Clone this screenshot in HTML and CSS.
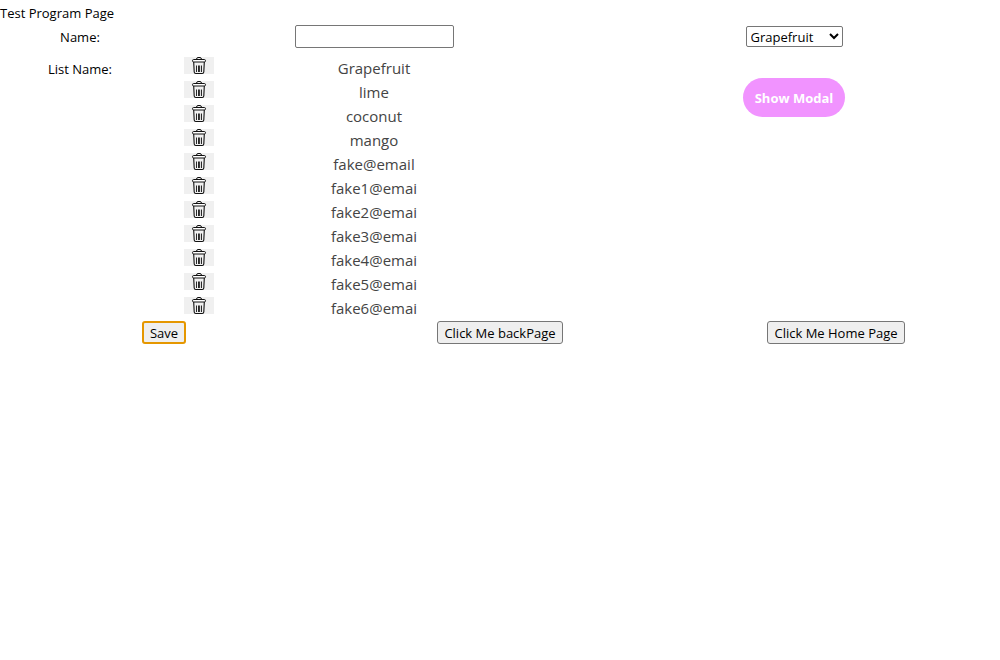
FILE: index.html
```
<!DOCTYPE html>
<html lang="en">
<head>
<meta charset="utf-8">
<title>Test Program Page</title>
<link rel="stylesheet" href="styles.css">
</head>
<body>
<svg class="symbols" aria-hidden="true">
  <symbol id="trash" viewBox="0 0 16 18">
    <g fill="none" stroke="#111" stroke-linejoin="round">
      <path stroke-width="1" d="M5.5 2.5Q5.5 .5 7 .5H9Q10.500 .5 10.500 2.5"/>
      <rect stroke-width="1" x="1.500" y="2.500" width="13" height="2.500" rx="1.200" fill="#fff"/>
      <path stroke-width="1.100" d="M2.700 5L3.200 15Q3.300 16.500 4.800 16.500H11.200Q12.700 16.500 12.800 15L13.300 5"/>
      <path stroke-width=".9" d="M5.500 8.500V15M7.500 8.500V15M8.600 8.500V15M10.500 8.500V15"/>
    </g>
  </symbol>
</svg>
<header class="title">Test Program Page</header>
<main>
  <div class="row name-row">
    <label for="name">Name:</label>
    <input class="name-input" id="name" type="text">
    <select class="fruit" aria-label="Fruit">
      <option>Grapefruit</option><option>lime</option><option>coconut</option><option>mango</option>
    </select>
  </div>
  <div class="row list-row">
    <div class="list-label">List Name:</div>
    <ul class="list">
      <li><button class="delete" aria-label="Delete"><svg><use href="#trash"/></svg></button><span>Grapefruit</span></li>
      <li><button class="delete" aria-label="Delete"><svg><use href="#trash"/></svg></button><span>lime</span></li>
      <li><button class="delete" aria-label="Delete"><svg><use href="#trash"/></svg></button><span>coconut</span></li>
      <li><button class="delete" aria-label="Delete"><svg><use href="#trash"/></svg></button><span>mango</span></li>
      <li><button class="delete" aria-label="Delete"><svg><use href="#trash"/></svg></button><span>fake@email</span></li>
      <li><button class="delete" aria-label="Delete"><svg><use href="#trash"/></svg></button><span>fake1@emai</span></li>
      <li><button class="delete" aria-label="Delete"><svg><use href="#trash"/></svg></button><span>fake2@emai</span></li>
      <li><button class="delete" aria-label="Delete"><svg><use href="#trash"/></svg></button><span>fake3@emai</span></li>
      <li><button class="delete" aria-label="Delete"><svg><use href="#trash"/></svg></button><span>fake4@emai</span></li>
      <li><button class="delete" aria-label="Delete"><svg><use href="#trash"/></svg></button><span>fake5@emai</span></li>
      <li><button class="delete" aria-label="Delete"><svg><use href="#trash"/></svg></button><span>fake6@emai</span></li>
    </ul>
    <button class="modal-button">Show Modal</button>
  </div>
</main>
<footer class="actions">
  <button class="action focused">Save</button>
  <button class="action">Click Me backPage</button>
  <button class="action">Click Me Home Page</button>
</footer>
</body>
</html>
```
FILE: styles.css
```
* { box-sizing: border-box; }
body {
  margin: 0;
  background: #fff;
  color: #000;
  font: 13px/18px "Segoe UI", "Open Sans", "Noto Sans", sans-serif;
}
button, input, select { font: inherit; color: inherit; margin: 0; }
.symbols { display: none; }
.title { padding-top: 4px; height: 24px; }
.row {
  display: grid;
  grid-template-columns: 40fr 107fr 103fr;
  justify-items: center;
}
.name-row { align-items: center; height: 25px; }
.name-input {
  width: 159px;
  height: 23px;
  padding: 1px 2px;
  border: 1px solid #767676;
  border-radius: 2px;
  background: #fff;
}
.fruit {
  width: 97px;
  height: 21px;
  padding: 0;
  border: 1px solid #767676;
  border-radius: 2px;
  background-color: #fff;
}
.list-row { align-items: start; padding-top: 8px; }
.list-label { padding-top: 3px; }
.list {
  display: grid;
  row-gap: 2px;
  width: 100%;
  margin: 0;
  padding: 0 0 2px;
  list-style: none;
  color: #444;
  font-size: 15px;
  line-height: 22px;
}
.list li {
  display: grid;
  grid-template-columns: 54px 1fr 54px;
  text-align: center;
}
.delete {
  justify-self: end;
  display: flex;
  justify-content: center;
  width: 30px;
  height: 17px;
  padding: 0;
  border: 0;
  background: #f0f0f0;
}
.delete svg { width: 16px; height: 18px; flex: none; }
.modal-button {
  margin-top: 21px;
  height: 39px;
  padding: 0 12px;
  border: 0;
  border-radius: 20px;
  background: #f193ff;
  color: #fff;
  font-weight: 700;
}
.actions {
  display: grid;
  grid-template-columns: repeat(3, 1fr);
  column-gap: 8px;
  justify-items: center;
}
.action {
  height: 23px;
  padding: 1px 6px;
  border: 1px solid #767676;
  border-radius: 3px;
  background: #efefef;
}
.focused { border: 2px solid #e59700; padding: 0 6px; }
```
